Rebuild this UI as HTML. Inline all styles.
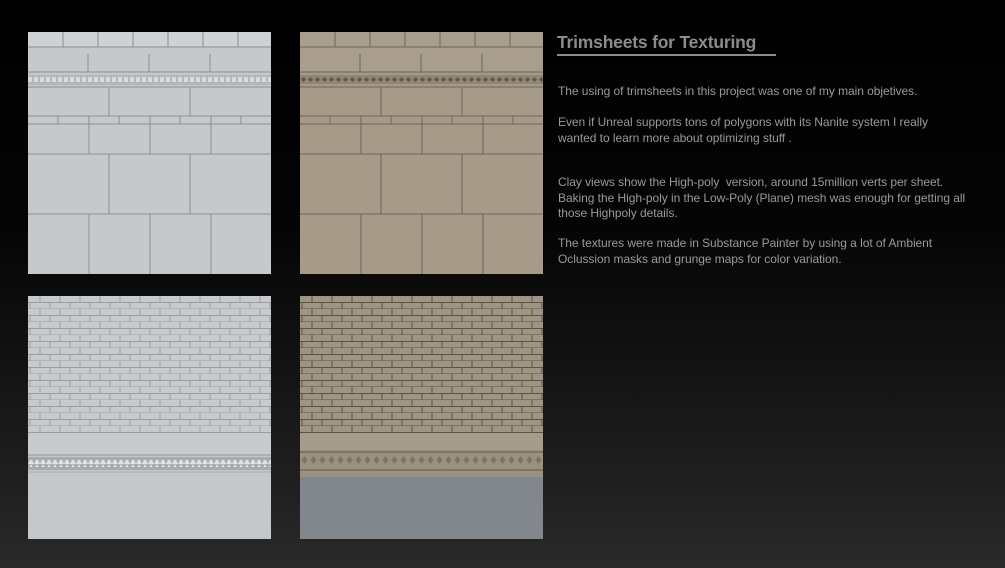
<!DOCTYPE html>
<html><head><meta charset="utf-8"><style>
html,body{margin:0;padding:0}
body{width:1005px;height:568px;overflow:hidden;background:linear-gradient(#000 0%,#050505 40%,#1f1f1f 85%,#2a2a2a 100%);position:relative;font-family:"Liberation Sans",sans-serif}
svg.p{position:absolute}
.t{position:absolute;left:558px;color:#9a9a9a;font-size:12px;line-height:15.5px;letter-spacing:-0.05px}
h1{position:absolute;left:557px;top:32px;margin:0;font-size:17.5px;color:#8c8c8c;font-weight:bold;letter-spacing:-0.2px}
.ul{position:absolute;left:557px;top:54px;width:219px;height:2px;background:#8c8c8c}
</style></head><body>
<svg class="p" style="left:28px;top:32px" width="243" height="242">
<rect width="243" height="242" fill="#c6c9cc"/>
<rect y="0" width="243" height="15" fill="#cfd2d5"/>
<g stroke="#8a8e92" stroke-width="1"><line x1="0" y1="15" x2="243" y2="15"/><line x1="0" y1="40" x2="243" y2="40"/><line x1="0" y1="55" x2="243" y2="55"/><line x1="0" y1="84" x2="243" y2="84"/><line x1="0" y1="92" x2="243" y2="92"/><line x1="0" y1="122" x2="243" y2="122"/><line x1="0" y1="182" x2="243" y2="182"/>
<path d="M35 0V15M70 0V15M105 0V15M140 0V15M175 0V15M210 0V15M60 22V40M121 22V40M182 22V40M81 56V84M162 56V84M30 84V92M61 84V92M91 84V92M122 84V92M152 84V92M183 84V92M213 84V92M61 92V122M122 92V122M183 92V122M81 122V182M162 122V182M61 182V242M122 182V242M183 182V242"/></g>
<rect y="43" width="243" height="10" fill="#b4b7ba"/>
<rect y="45" width="243" height="5" fill="url(#d1)"/>
<defs><pattern id="d1" width="6" height="5" patternUnits="userSpaceOnUse"><rect width="4" height="5" fill="#d8dadc"/></pattern></defs>
</svg>
<svg class="p" style="left:300px;top:32px" width="243" height="242">
<rect width="243" height="242" fill="#a89a88"/>
<rect y="0" width="243" height="40" fill="#a99e8d"/>
<g stroke="#6e6658" stroke-width="1"><line x1="0" y1="15" x2="243" y2="15"/><line x1="0" y1="40" x2="243" y2="40"/><line x1="0" y1="55" x2="243" y2="55"/><line x1="0" y1="84" x2="243" y2="84"/><line x1="0" y1="92" x2="243" y2="92"/><line x1="0" y1="122" x2="243" y2="122"/><line x1="0" y1="182" x2="243" y2="182"/>
<path d="M35 0V15M70 0V15M105 0V15M140 0V15M175 0V15M210 0V15M60 22V40M121 22V40M182 22V40M81 56V84M162 56V84M30 84V92M61 84V92M91 84V92M122 84V92M152 84V92M183 84V92M213 84V92M61 92V122M122 92V122M183 92V122M81 122V182M162 122V182M61 182V242M122 182V242M183 182V242"/></g>
<rect y="43" width="243" height="9" fill="#8f8676"/>
<rect y="45" width="243" height="5" fill="url(#d2)"/>
<defs><pattern id="d2" width="7" height="5" patternUnits="userSpaceOnUse"><path d="M3.5 0L6 2.5 3.5 5 1 2.5z" fill="#5e584c"/></pattern></defs>
</svg>
<svg class="p" style="left:28px;top:296px" width="243" height="243">
<defs><pattern id="b1" width="40" height="13" patternUnits="userSpaceOnUse"><rect width="40" height="13" fill="#c8cbce"/><path d="M0 6.5H40M0 13H40M12 0V6.5M32 0V6.5M2 6.5V13M22 6.5V13" stroke="#9a9ea2" stroke-width="1"/></pattern>
<pattern id="d3" width="6" height="6" patternUnits="userSpaceOnUse"><path d="M0 6L3 0 6 6z" fill="#e0e2e4"/></pattern></defs>
<rect width="243" height="243" fill="#c5c8cb"/>
<rect width="243" height="137" fill="url(#b1)"/>
<rect y="137" width="243" height="22" fill="#c8cbce"/>
<line x1="0" y1="159" x2="243" y2="159" stroke="#999" />
<rect y="161" width="243" height="13" fill="#a9acaf"/>
<rect y="164" width="243" height="7" fill="url(#d3)"/>
<line x1="0" y1="176" x2="243" y2="176" stroke="#aaa"/>
</svg>
<svg class="p" style="left:300px;top:296px" width="243" height="243">
<defs><pattern id="b2" width="40" height="13" patternUnits="userSpaceOnUse"><rect width="40" height="13" fill="#a09483"/><path d="M0 6.5H40M0 13H40M12 0V6.5M32 0V6.5M2 6.5V13M22 6.5V13" stroke="#5a5448" stroke-width="1"/></pattern>
<pattern id="d4" width="9" height="8" patternUnits="userSpaceOnUse"><path d="M4.5 0L7.5 4 4.5 8 1.5 4z" fill="#7c7564"/></pattern></defs>
<rect width="243" height="243" fill="#9e9382"/>
<rect width="243" height="137" fill="url(#b2)"/>
<rect y="137" width="243" height="17" fill="#a69c8c"/>
<rect y="154" width="243" height="27" fill="#9b917f"/>
<rect y="160" width="243" height="9" fill="url(#d4)"/>
<line x1="0" y1="156" x2="243" y2="156" stroke="#5f5a4e"/>
<line x1="0" y1="174" x2="243" y2="174" stroke="#5f5a4e"/>
<rect y="181" width="243" height="62" fill="#82878e"/>
</svg>
<h1>Trimsheets for Texturing</h1><div class="ul"></div>
<div class="t" style="top:84px">The using of trimsheets in this project was one of my main objetives.</div>
<div class="t" style="top:115px">Even if Unreal supports tons of polygons with its Nanite system I really<br>wanted to learn more about optimizing stuff .</div>
<div class="t" style="top:175px">Clay views show the High-poly&nbsp; version, around 15million verts per sheet.<br>Baking the High-poly in the Low-Poly (Plane) mesh was enough for getting all<br>those Highpoly details.</div>
<div class="t" style="top:236px">The textures were made in Substance Painter by using a lot of Ambient<br>Oclussion masks and grunge maps for color variation.</div>
</body></html>
